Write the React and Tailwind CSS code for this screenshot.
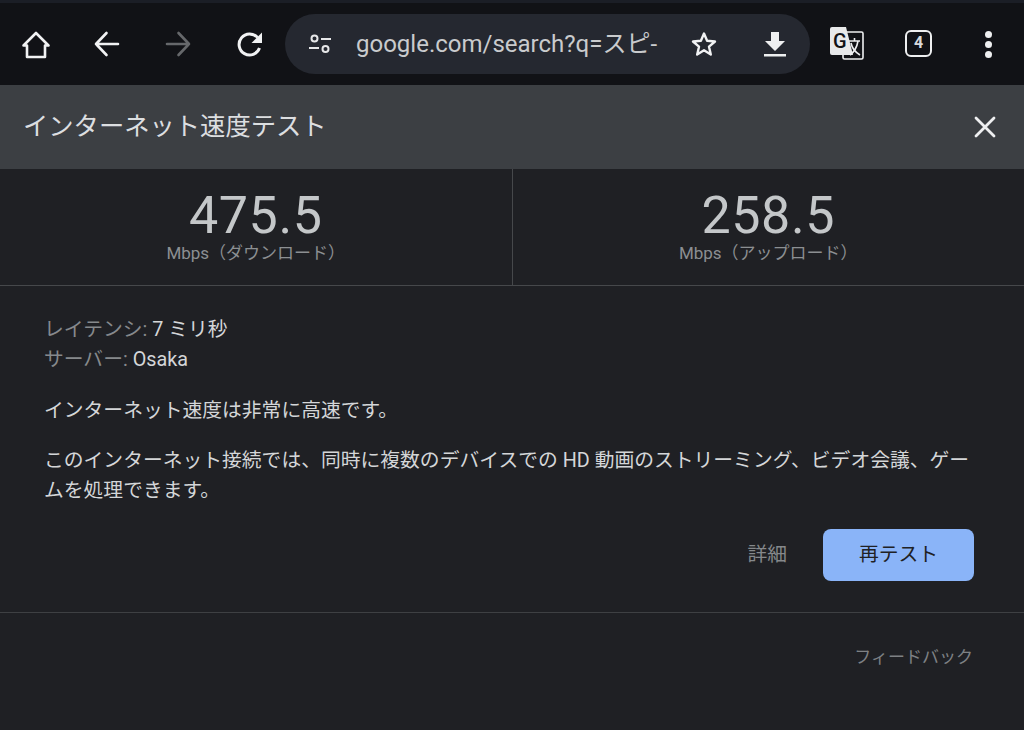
import React from "react";

const Font = '[font-family:Roboto,"Noto_Sans_CJK_JP",sans-serif]';

const Stat = ({ value, label, divider }) => (
  <div className={`flex-1 flex flex-col items-center pt-[23px] ${divider ? "border-r border-[#46484b]" : ""}`}>
    <div className="text-[52px] leading-[48px] tracking-[0.6px] text-[#c4c7c9]">{value}</div>
    <div className="mt-[3px] text-[17px] leading-[20px] text-[#8c8f92]">{label}</div>
  </div>
);

export default function App() {
  return (
    <div className={`w-[1024px] h-[730px] overflow-hidden bg-[#1f2024] ${Font}`}>
      {/* browser toolbar */}
      <div className="h-[85px] bg-[#111216] border-t-[3px] border-[#1b1e26] flex items-center pl-[20px]">
        <svg width="32" height="32" viewBox="0 0 32 32" fill="none" stroke="#f1f2f3" strokeWidth="2.6" strokeLinejoin="round" strokeLinecap="round" className="mt-[1px]">
          <path d="M3.5 16.5 16 4l12.5 12.5H25V28H7V16.5Z" />
        </svg>
        <svg width="28" height="28" viewBox="0 0 28 28" fill="none" stroke="#f1f2f3" strokeWidth="2.6" strokeLinecap="round" strokeLinejoin="round" className="ml-[41px]">
          <path d="M25 14H3M13.5 3 3 14l10.5 11" />
        </svg>
        <svg width="28" height="28" viewBox="0 0 28 28" fill="none" stroke="#66686b" strokeWidth="2.6" strokeLinecap="round" strokeLinejoin="round" className="ml-[43px]">
          <path d="M3 14h22M14.5 3 25 14 14.5 25" />
        </svg>
        <svg width="28" height="28" viewBox="0 0 28 28" fill="none" className="ml-[44px]">
          <path d="M23.5 18a10.5 10.5 0 1 1-2-10.5" stroke="#f1f2f3" strokeWidth="3" />
          <path d="M26 2.5V13H15.5Z" fill="#f1f2f3" />
        </svg>
        {/* address bar */}
        <div className="ml-[21px] w-[525px] h-[60px] rounded-full bg-[#252830] flex items-center pl-[24px]">
          <svg width="22" height="20" viewBox="0 0 22 20" fill="none" stroke="#e6e7e8" strokeWidth="2">
            <circle cx="5.5" cy="4.5" r="3" />
            <path d="M12 5h10M0 14h10" />
            <circle cx="16.5" cy="15" r="3" />
          </svg>
          <div className="ml-[25px] w-[306px] text-[24px] leading-[30px] text-[#c9cbcd] whitespace-nowrap">google.com/search?q=スピ-</div>
          <svg width="26" height="26" viewBox="0 0 26 26" fill="none" stroke="#f1f2f3" strokeWidth="2.4" strokeLinejoin="round" className="ml-[29px]">
            <path d="m13 2.5 3.1 7.3 7.9.7-6 5.2 1.800 7.800L13 19.300 6.200 23.500 8 15.700 2 10.500l7.900-.7Z" />
          </svg>
          <svg width="24" height="26" viewBox="0 0 24 26" fill="#eeeff0" className="ml-[46px]">
            <path d="M8 1h8v9h6L12 20 2 10h6Z" />
            <rect x="1" y="23" width="22" height="2.5" />
          </svg>
        </div>
        {/* translate */}
        <svg width="34" height="34" viewBox="0 0 34 34" className="ml-[20px]">
          <rect x="13" y="5" width="20" height="27" rx="1.5" fill="#111216" stroke="#eeeff0" strokeWidth="1.6" />
          <path d="M2 0h14l7 28H2a2 2 0 0 1-2-2V2a2 2 0 0 1 2-2Z" fill="#e8e9ea" />
          <path d="M19 14h11M24.5 11v3M28 14c-1 6-4 11-8 14M21 16c1 5 4 9 9 12" fill="none" stroke="#eeeff0" strokeWidth="1.6" />
          <text x="3" y="21" fontSize="20" fontWeight="500" fill="#111216" fontFamily="Roboto">G</text>
        </svg>
        <div className="ml-[41px] mt-[-2px] w-[27px] h-[27px] rounded-[6px] border-[2.5px] border-[#eeeff0] flex items-center justify-center text-[16px] font-bold text-[#d8dadc]">4</div>
        <div className="ml-[53px] flex flex-col gap-[3px]">
          <span className="w-[7px] h-[7px] rounded-full bg-[#eeeff0]" />
          <span className="w-[7px] h-[7px] rounded-full bg-[#eeeff0]" />
          <span className="w-[7px] h-[7px] rounded-full bg-[#eeeff0]" />
        </div>
      </div>

      {/* dialog title */}
      <div className="h-[84px] bg-[#3c3f43] flex items-center justify-between pl-[23px] pr-[28px]">
        <div className="text-[25.3px] leading-[34px] text-[#dcdee0]">インターネット速度テスト</div>
        <svg width="22" height="22" viewBox="0 0 22 22" stroke="#eeeff0" strokeWidth="2.8" strokeLinecap="round">
          <path d="M2 2l18 18M20 2 2 20" />
        </svg>
      </div>

      {/* results */}
      <div className="flex h-[117px] border-b border-[#46484b]">
        <Stat value="475.5" label="Mbps（ダウンロード）" divider />
        <Stat value="258.5" label="Mbps（アップロード）" />
      </div>

      {/* details */}
      <div className="pt-[29px] pl-[44px] pr-[46px] text-[19.8px] leading-[30px] text-[#d4d6d8] border-b border-[#3e4043] h-[327px]">
        <div><span className="text-[#86898c]">レイテンシ: </span>7 ミリ秒</div>
        <div><span className="text-[#86898c]">サーバー: </span>Osaka</div>
        <div className="mt-[21px]">インターネット速度は非常に高速です。</div>
        <div className="mt-[20px] w-[934px]">このインターネット接続では、同時に複数のデバイスでの HD 動画のストリーミング、ビデオ会議、ゲームを処理できます。</div>
        <div className="mt-[23px] flex items-center justify-end pr-[4px]">
          <div className="text-[#85888b] mr-[36px]">詳細</div>
          <div className="w-[151px] h-[52px] rounded-[8px] bg-[#8ab4f8] text-[#202124] flex items-center justify-center">再テスト</div>
        </div>
      </div>

      {/* feedback */}
      <div className="pt-[32px] pr-[51px] text-right text-[17px] leading-[24px] text-[#7e8184]">フィードバック</div>
    </div>
  );
}
